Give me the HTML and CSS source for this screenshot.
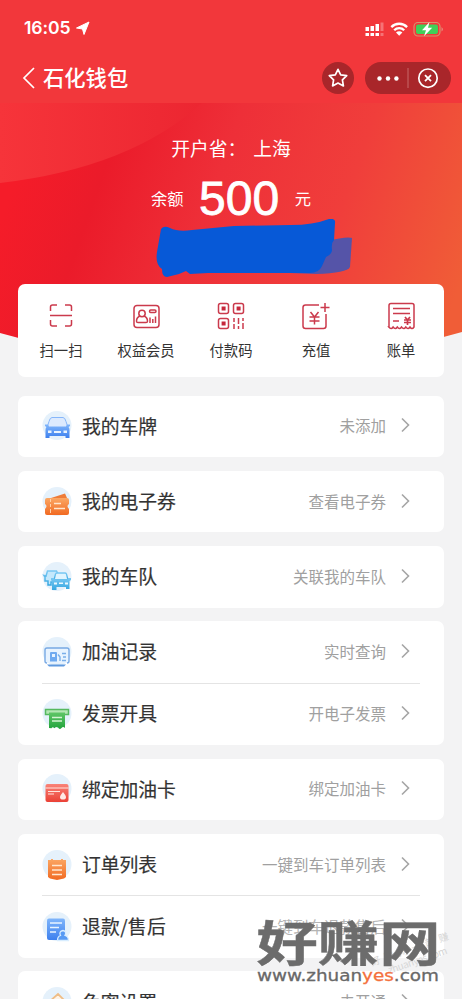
FILE: index.html
```html
<!DOCTYPE html>
<html lang="zh-CN">
<head>
<meta charset="utf-8">
<title>石化钱包</title>
<link rel="stylesheet" href="styles.css">
</head>
<body>
<svg class="defs" width="0" height="0" aria-hidden="true">
  <defs>
    <linearGradient id="blue" x2="0" y2="1"><stop stop-color="#7fb5fb"/><stop offset="1" stop-color="#3d80ee"/></linearGradient>
    <linearGradient id="orange" x2="0" y2="1"><stop stop-color="#fba764"/><stop offset="1" stop-color="#f16a22"/></linearGradient>
    <linearGradient id="cyan" x2="0" y2="1"><stop stop-color="#79c8f3"/><stop offset="1" stop-color="#36a7e0"/></linearGradient>
    <linearGradient id="green" x2="0" y2="1"><stop stop-color="#5fc667"/><stop offset="1" stop-color="#22a33c"/></linearGradient>
    <linearGradient id="red" x2="0" y2="1"><stop stop-color="#f98378"/><stop offset="1" stop-color="#ea4136"/></linearGradient>
    <symbol id="chevron" viewBox="0 0 10 16"><path d="M1 1.500 7.500 8 1 14.500" fill="none" stroke="#a5a5a5" stroke-width="1.600"/></symbol>
  </defs>
</svg>
<div class="screen">
  <header class="top">
    <div class="status">
      <span class="time">16:05</span>
      <svg class="loc" width="15" height="15" viewBox="0 0 15 15"><path d="M14 1 9 13.500 7.500 8 1.500 7z" fill="#fff" stroke="#fff" stroke-width="1" stroke-linejoin="round"/></svg>
      <svg class="signals" width="80" height="18" viewBox="0 0 80 18">
        <g fill="#fff"><path d="M.5 8h3.500v4H.5zM5.500 7H9v5H5.500zM10.500 5H14v7h-3.500zM.5 14H4v3H.5zM5.500 14H9v3H5.500zM10.500 14H14v3h-3.500z"/><path opacity=".3" d="M15.500 3.500h3V12h-3zM15.500 14h3v3h-3z"/></g>
        <g fill="none" stroke="#fff" stroke-width="2.300"><path d="M26.300 8.100a11 11 0 0 1 15.800 0"/><path d="M29.200 11.200a7 7 0 0 1 10 0"/></g><path d="m31 13.600 3.200 3.200 3.200-3.200a4.600 4.600 0 0 0-6.400 0z" fill="#fff"/>
        <rect x="49" y="3.500" width="26" height="13.500" rx="4" fill="none" stroke="#d8906d" stroke-width="1.200"/><rect x="51" y="5.500" width="22" height="9.500" rx="2.200" fill="#3fcf58"/><path d="M76.500 8v4.500q3-2.200 0-4.500z" fill="#e7877a"/><path d="m64.500 3-7.500 8.200h4L59 17.200l8.200-8.400h-4.200z" fill="#fff"/>
      </svg>
    </div>
    <div class="nav">
      <svg width="13" height="22" viewBox="0 0 13 22"><path d="M12 1 2 11l10 10" fill="none" stroke="#fff" stroke-width="1.700"/></svg>
      <h1>石化钱包</h1>
      <span class="star"><svg width="22" height="22" viewBox="0 0 22 22"><path d="m11 2.300 2.700 5.500 6 .9-4.300 4.200 1 6-5.400-2.800-5.400 2.800 1-6-4.300-4.200 6-.9z" fill="none" stroke="#fff" stroke-width="1.700" stroke-linejoin="round"/></svg></span>
      <span class="capsule">
        <svg width="86" height="32" viewBox="0 0 86 32"><g fill="#fff"><circle cx="14.500" cy="16.500" r="2.200"/><circle cx="23" cy="16.500" r="2.200"/><circle cx="31.400" cy="16.500" r="2.200"/></g><path d="M43 6v20" stroke="#c76868"/><circle cx="63" cy="16.200" r="9.200" fill="none" stroke="#fff" stroke-width="1.700"/><path d="m60 13.200 6 6m0-6-6 6" stroke="#fff" stroke-width="1.800"/></svg>
      </span>
    </div>
  </header>

  <section class="hero">
    <svg class="hero-art" width="462" height="255" viewBox="0 0 462 255">
      <defs>
        <linearGradient id="hero" gradientUnits="userSpaceOnUse" x1="20" y1="60" x2="450" y2="210"><stop stop-color="#f51c29"/><stop offset=".18" stop-color="#eb1b2a"/><stop offset=".42" stop-color="#ee2f38"/><stop offset=".7" stop-color="#f03e3b"/><stop offset="1" stop-color="#f05d37"/></linearGradient>
        <linearGradient id="sheen" x1="0" y1="0" x2="1" y2="0"><stop stop-color="#f6343a"/><stop offset="1" stop-color="#ec2631"/></linearGradient>
      </defs>
      <path d="M0 0h462v229Q231 296 0 230z" fill="url(#hero)"/>
      <path d="M0 0h202Q130 65 0 80z" fill="url(#sheen)"/>
    </svg>
    <div class="province"><span>开户省：</span><span>上海</span></div>
    <div class="balance"><span>余额</span><strong>500</strong><span>元</span></div>
    <svg class="scribble" width="202" height="60" viewBox="0 0 202 60">
      <path d="M172 22q22-5 26-3l-2 29q-3 6-34 7l-26-1z" fill="#5554a8"/>
      <path d="M7 10q3-4 9-1 8 4 22 2l42-4 57-1q22 0 38-6 7-1 6 4l-1 17q-3 3-2 10 0 4-6 7l-4 9q-3 7-12 7L54 54l-18 1-4-3-7 3-12 3q-5 0-5-8-7-4-5-17z" fill="#0759d7"/>
    </svg>
  </section>

  <nav class="quick">
    <div class="action"><svg width="30" height="30" viewBox="0 0 30 30" class="line"><path d="M4.500 10V6q0-2 2-2H11M19 4h4.500q2 0 2 2v4M4.500 19v4q0 2 2 2H11M19 25h4.500q2 0 2-2v-4M4 14.500h22"/></svg><span>扫一扫</span></div>
    <div class="action"><svg width="30" height="30" viewBox="0 0 30 30" class="line"><rect x="3" y="4.500" width="25" height="22" rx="3"/><circle cx="11" cy="12.500" r="3.200"/><path d="M9 15q-3.500 1.200-3.500 5.200 0 1.300 1.500 1.300h8q1.500 0 1.500-1.300 0-4-3.500-5.200M19 16.500V22M21.800 18v4M24.500 15.500V22"/><rect x="18.500" y="9" width="6.500" height="2.500" rx="1.200"/></svg><span>权益会员</span></div>
    <div class="action"><svg width="30" height="30" viewBox="0 0 30 30" class="line"><rect x="2.500" y="2.500" width="10" height="10" rx="2"/><rect x="17.500" y="2.500" width="10" height="10" rx="2"/><rect x="2.500" y="17.500" width="10" height="10" rx="2"/><path class="solid" d="M5.600 5.600h4v4h-4zM20.600 5.600h4v4h-4zM5.600 20.600h4v4h-4z"/><path d="M18 17v4m0 2v5M22.500 17v6m0 2v3M27 17v3m0 2v6"/></svg><span>付款码</span></div>
    <div class="action"><svg width="30" height="30" viewBox="0 0 30 30" class="line"><path d="M18 4H4.500Q2 4 2 6.500V25q0 2.500 2.500 2.500h18Q25 27.500 25 25V13M24 2v9M19.500 6.500h9M9.500 11l4 5 4-5M8.500 16h10M8.500 20h10M13.500 16v7.500"/></svg><span>充值</span></div>
    <div class="action"><svg width="30" height="30" viewBox="0 0 30 30" class="line"><path d="M3 26V4.500Q3 2.500 5 2.500h21q2 0 2 2V26q-2 3-4 0-2 3-4.200 0-2 3-4.300 0-2 3-4.200 0-2 3-4.200 0-2 3-4.300 0zM7 7.500h17M7 12.500h17M7 20h6"/><path d="m19 16 2.500 3 2.500-3M18 19h7M18 21.500h7M21.500 18.500V24" stroke-width="1.700"/></svg><span>账单</span></div>
  </nav>

  <main class="list">
    <section class="card">
      <div class="row"><svg class="ico" viewBox="0 0 30 30"><circle cx="15" cy="14.500" r="14.500"/><path d="M7 10.500q1-4 3-4h11q2 0 3 4l2 6H5z" fill="#dceafe" stroke="#86b6fa"/><path d="M3 13.500h3l1 2h17l1-2h3v1.500l-1.500 1q1 1 1 3V27h-4v-2h-16v2h-4v-8q0-2 1-3L3 15z" fill="url(#blue)"/><path d="M6 19.500h3.500v2.500H6zM21.500 19.500H25V22h-3.500zM12 20h7v2h-7z" fill="#e8f3ff"/></svg><b>我的车牌</b><span>未添加</span><svg class="arrow"><use href="#chevron"/></svg></div>
    </section>
    <section class="card">
      <div class="row"><svg class="ico" viewBox="0 0 30 30"><circle cx="15" cy="14.500" r="14.500"/><path d="m9 11 14-4.500 2 4.500 1 5z" fill="#ee7c38"/><path d="M3 13q0-2 2-2h20q2 0 2 2v4q-3 2 0 5v4q0 2-2 2H5q-2 0-2-2v-4q3-3 0-5z" fill="url(#orange)"/><path d="M12 16.500h7M12 21.500h11" stroke="#ffe6ce" stroke-width="1.700"/><path d="M8.500 12v3m0 2v3m0 2v4" stroke="#ffd2ab"/></svg><b>我的电子券</b><span>查看电子券</span><svg class="arrow"><use href="#chevron"/></svg></div>
    </section>
    <section class="card">
      <div class="row"><svg class="ico" viewBox="0 0 30 30"><circle cx="15" cy="14.500" r="14.500"/><path d="M4 14 5.500 9h9l2 4-5 7H9v3H6v-4H3v-4l-1-1.500z" fill="#c4e8fc" stroke="url(#cyan)" stroke-width="1.500"/><path d="m12 18 1.500-6q.5-1 1.500-1h8q1 0 1.500 1l1.500 6z" fill="#dff4ff" stroke="url(#cyan)" stroke-width="1.300"/><path d="M9 16h3l1 1.500h12l1-1.500h3v2l-1.500 1v8h-3.500v-2H14.500v3H10v-8.500L9 18z" fill="url(#cyan)"/><path d="M12 20.500h3v2h-3zm11 0h3v2h-3zm-6 0h4v1.500h-4z" fill="#edf9ff"/></svg><b>我的车队</b><span>关联我的车队</span><svg class="arrow"><use href="#chevron"/></svg></div>
    </section>
    <section class="card">
      <div class="row"><svg class="ico" viewBox="0 0 30 30"><circle cx="15" cy="14.500" r="14.500"/><path d="M5 26q-2 0-2-2V13q0-2 2-2h20q2 0 2 2v11q0 2-2 2" fill="#e7f3ff" stroke="#78a9e4" stroke-width="1.400"/><path d="M7 29.500h15l2-2H5z" fill="#5f99df"/><path d="M8 24.500V16q0-1 1-1h5q1 0 1 1v8.500zM10 17v3h3v-3z" fill="#6faaf0" fill-rule="evenodd"/><path d="M16 17.500 18 20v4M20 16.500h4M21 20h3M20 23.500h4" fill="none" stroke="#78aee9" stroke-width="1.400"/></svg><b>加油记录</b><span>实时查询</span><svg class="arrow"><use href="#chevron"/></svg></div>
      <div class="row"><svg class="ico" viewBox="0 0 30 30"><circle cx="15" cy="14.500" r="14.500"/><path d="M3.500 10.500h23v5h-23z" fill="#b3e6b3" stroke="#55b960" stroke-width="1.500"/><path d="M7 13.500h16V29q-2-2-3.500 0-2 2-3.500-.5-2-1.500-3.500.8-2-2-3 0L7 29z" fill="url(#green)"/><path d="M10 18.500h10M10 22h10" stroke="#d5f4d3" stroke-width="1.500"/></svg><b>发票开具</b><span>开电子发票</span><svg class="arrow"><use href="#chevron"/></svg></div>
    </section>
    <section class="card">
      <div class="row"><svg class="ico" viewBox="0 0 30 30"><circle cx="15" cy="14.500" r="14.500"/><rect x="3.500" y="10" width="23" height="18" rx="2" fill="url(#red)"/><path d="M3.500 14h23M6 17.500h12M6 20h6" stroke="#ffe6df" stroke-width="1.200"/><path d="M21 18q-3 3.500-3 5a3 2.600 0 0 0 6 0q0-1.500-3-5z" fill="#ffeae5"/></svg><b>绑定加油卡</b><span>绑定加油卡</span><svg class="arrow"><use href="#chevron"/></svg></div>
    </section>
    <section class="card">
      <div class="row"><svg class="ico" viewBox="0 0 30 30"><circle cx="15" cy="14.500" r="14.500"/><path d="M6 10h3V9h2v1h8V9h2v1h3v17l-2 1.500-7 1.500-7-1.500L6 27z" fill="url(#orange)"/><path d="M10 15.500h10M10 20h10M10 24.500h10" stroke="#ffe8d1" stroke-width="1.500"/></svg><b>订单列表</b><span>一键到车订单列表</span><svg class="arrow"><use href="#chevron"/></svg></div>
      <div class="row"><svg class="ico" viewBox="0 0 30 30"><circle cx="15" cy="14.500" r="14.500"/><rect x="5" y="6.500" width="18" height="21.500" rx="2" fill="url(#blue)"/><path d="M8 11h12M8 15.500h9M8 20h6" stroke="#e7f4ff" stroke-width="1.500"/><path d="M15.500 28.500q0-4 3-5-2-4 2.500-5 4 1 2 5 3.500 1 3.500 5z" fill="#579af4" stroke="#d8edff" stroke-width="1.300"/></svg><b class="wide">退款/售后</b><span class="faint">一键到车退款售后</span><svg class="arrow"><use href="#chevron"/></svg></div>
    </section>
    <section class="card">
      <div class="row"><svg class="ico" viewBox="0 0 30 30"><circle cx="15" cy="14.500" r="14.500"/><path d="m7 15 9-8 8 8v10H7z" fill="#fff3e5" stroke="#efbd86" stroke-width="1.800"/></svg><b>免密设置</b><span>未开通</span><svg class="arrow"><use href="#chevron"/></svg></div>
    </section>
  </main>

  <svg class="watermark" width="206" height="90" viewBox="0 0 206 90">
    <g transform="rotate(-19 170 54)" class="stamp"><text x="128" y="47" textLength="82">好赚网一起赚</text><text x="142" y="60" textLength="62">zhuanyes.com</text></g>
    <text class="brand" transform="translate(0 56) scale(1 .77)" x="12.500" y="0" textLength="184" lengthAdjust="spacingAndGlyphs">好赚网</text>
    <text class="url" x="13" y="75.500" textLength="182" lengthAdjust="spacingAndGlyphs">www.zhuan<tspan class="accent">yes</tspan>.com</text>
  </svg>
</div>
</body>
</html>
```

FILE: styles.css
```css
* { box-sizing: border-box; }
html, body { margin: 0; height: 100%; overflow: hidden; }
body { background: #f3f3f4; color: #333; font-family: "Liberation Sans", "Noto Sans CJK SC", sans-serif; }
svg { display: block; flex: none; }
.defs { position: absolute; }
.screen { position: relative; width: 462px; height: 999px; overflow: hidden; }

.top { height: 103px; background: #f2373b; color: #fff; }
.status { height: 54px; padding: 2px 17px 0 24px; display: flex; align-items: center; }
.time { font: 600 17.6px/20px Inter, "Liberation Sans", sans-serif; letter-spacing: -.1px; }
.loc { margin-left: 5px; }
.signals { margin-left: auto; }
.nav { height: 49px; padding: 0 11px 1px 22px; display: flex; align-items: center; }
.nav h1 { margin: 0 auto 0 8px; padding-bottom: 2px; font: 500 21.3px/30px "Noto Sans CJK SC", sans-serif; }
.star, .capsule { height: 32px; border-radius: 16px; background: #a9262a; display: flex; align-items: center; justify-content: center; }
.star { width: 32px; margin-right: 11px; }
.capsule { width: 86px; }

.hero { position: relative; height: 181px; padding-top: 29px; color: #fff; font-family: "Noto Sans CJK SC", sans-serif; }
.hero-art { position: absolute; inset: 0 auto auto 0; }
.province, .balance { position: relative; display: flex; justify-content: center; align-items: center; }
.province { gap: 7px; height: 30px; font-size: 18.8px; }
.balance { height: 72px; gap: 15.500px; font-size: 16.3px; }
.balance strong { font: 400 48px/50px "Liberation Sans", sans-serif; -webkit-text-stroke: .8px #fff; padding-top: 2px; }
.scribble { position: absolute; left: 154px; top: 116px; filter: blur(.6px); }

.quick { position: relative; margin: 0 18px; height: 93px; padding-top: 17px; border-radius: 7px; background: #fff; display: grid; grid-template-columns: repeat(5, 85px); justify-content: center; }
.action { display: flex; flex-direction: column; align-items: center; gap: 8px; font: 14.3px/21px "Noto Sans CJK SC", sans-serif; }
.line { fill: none; stroke: #cb3a4c; stroke-width: 1.5; }
.line .solid { fill: #c5283c; stroke: none; }

.list { margin: 18.500px 18px 0; display: flex; flex-direction: column; gap: 13.500px; }
.card { background: #fff; border-radius: 7px; padding: 0 24px; }
.row { height: 61.700px; padding-right: 9px; display: flex; align-items: center; font-family: "Noto Sans CJK SC", sans-serif; }
.row + .row { position: relative; height: 62.300px; }
.row + .row::before { content: ""; position: absolute; left: 0; right: 0; top: 0; height: 1px; background: #e4e4e4; }
.ico { width: 30px; height: 30px; fill: #e5f1fb; }
.row b { margin-left: 10px; padding-bottom: 2px; font-weight: 400; font-size: 18.8px; color: #333; -webkit-text-stroke: .2px #333; }
.row b.wide { letter-spacing: .3px; }
.row span { margin-left: auto; padding-bottom: 2px; font-size: 15.500px; color: #a0a0a0; }
.row span.faint { color: #b4b4b4; }
.arrow { width: 10px; height: 16px; margin: -2px 0 0 15px; }

.watermark { position: absolute; left: 244px; top: 905px; }
.brand { font: 700 62px "Noto Sans CJK SC", sans-serif; fill: #6c6c6c; stroke: #6c6c6c; stroke-width: .5px; }
.url { font: 16px "DejaVu Sans", sans-serif; fill: #686868; stroke: #686868; stroke-width: .3px; }
.accent { fill: #f4703c; stroke: #f4703c; }
.stamp { font: 10px "Noto Sans CJK SC", sans-serif; fill: #d6d6d6; }
```
